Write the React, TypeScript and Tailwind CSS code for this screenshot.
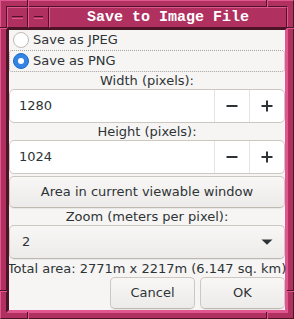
import React from "react";

function Bevel({ className = "", children }: { className?: string; children?: React.ReactNode }) {
  return (
    <div className={`border border-t-[#e0578f] border-l-[#e0578f] border-b-[#4d1428] border-r-[#4d1428] bg-[#b03060] ${className}`}>
      {children}
    </div>
  );
}

function Radio({ checked, label, focus }: { checked?: boolean; label: string; focus?: boolean }) {
  return (
    <div
      className={`flex items-center gap-[4px] pl-[3px] ${
        focus ? "h-[22px] border border-dotted border-[#a8a4a0] rounded-[3px]" : "h-[20px] border border-transparent"
      }`}
    >
      {checked ? (
        <span className="w-[16px] h-[16px] rounded-full bg-[#3584e4] border border-[#1b6acb] flex items-center justify-center">
          <span className="w-[6px] h-[6px] rounded-full bg-white" />
        </span>
      ) : (
        <span className="w-[16px] h-[16px] rounded-full bg-white border border-[#c0bab4]" />
      )}
      <span>{label}</span>
    </div>
  );
}

function Label({ text, h = "h-[17px]" }: { text: string; h?: string }) {
  return <div className={`${h} flex items-center justify-center leading-none whitespace-nowrap`}>{text}</div>;
}

function Spin({ value }: { value: string }) {
  return (
    <div className="h-[34px] flex bg-white border border-[#cdc7c2] rounded-[5px] overflow-hidden">
      <div className="flex-1 flex items-center pl-[9px]">{value}</div>
      <div className="w-[35px] flex items-center justify-center border-l border-[#e6e3e0]">
        <svg width="12" height="12" viewBox="0 0 12 12">
          <rect x="0.5" y="5" width="11" height="2" fill="#2e3436" />
        </svg>
      </div>
      <div className="w-[35px] flex items-center justify-center border-l border-[#e6e3e0]">
        <svg width="12" height="12" viewBox="0 0 12 12">
          <rect x="0.5" y="5" width="11" height="2" fill="#2e3436" />
          <rect x="5" y="0.5" width="2" height="11" fill="#2e3436" />
        </svg>
      </div>
    </div>
  );
}

const btnBase =
  "flex items-center rounded-[5px] border border-[#cdc7c2] border-b-[#bfb8b1] bg-gradient-to-b from-[#f8f7f6] to-[#edebe9] shadow-[0_1px_0_rgba(0,0,0,0.05)]";
const btn = `${btnBase} justify-center`;

export default function App() {
  return (
    <div
      className="relative w-[294px] h-[319px] bg-[#b03060] border border-t-[#e0578f] border-l-[#e0578f] border-b-[#4d1428] border-r-[#4d1428] p-[5px] text-[13px] text-[#2e3436]"
      style={{ fontFamily: '"DejaVu Sans", sans-serif' }}
    >
      {/* resize handle breaks */}
      <span className="absolute top-[-1px] left-[26px] w-[1px] h-[7px] bg-[#4d1428]" />
      <span className="absolute top-[-1px] left-[27px] w-[1px] h-[7px] bg-[#e0578f]" />
      <span className="absolute top-[-1px] left-[265px] w-[1px] h-[7px] bg-[#4d1428]" />
      <span className="absolute top-[-1px] left-[266px] w-[1px] h-[7px] bg-[#e0578f]" />
      <span className="absolute bottom-[-1px] left-[26px] w-[1px] h-[7px] bg-[#4d1428]" />
      <span className="absolute bottom-[-1px] left-[27px] w-[1px] h-[7px] bg-[#e0578f]" />
      <span className="absolute bottom-[-1px] left-[265px] w-[1px] h-[7px] bg-[#4d1428]" />
      <span className="absolute bottom-[-1px] left-[266px] w-[1px] h-[7px] bg-[#e0578f]" />
      <span className="absolute left-[-1px] top-[26px] h-[1px] w-[7px] bg-[#4d1428]" />
      <span className="absolute left-[-1px] top-[27px] h-[1px] w-[7px] bg-[#e0578f]" />
      <span className="absolute right-[-1px] top-[26px] h-[1px] w-[7px] bg-[#4d1428]" />
      <span className="absolute right-[-1px] top-[27px] h-[1px] w-[7px] bg-[#e0578f]" />
      <span className="absolute left-[-1px] top-[289px] h-[1px] w-[7px] bg-[#4d1428]" />
      <span className="absolute left-[-1px] top-[290px] h-[1px] w-[7px] bg-[#e0578f]" />
      <span className="absolute right-[-1px] top-[289px] h-[1px] w-[7px] bg-[#4d1428]" />
      <span className="absolute right-[-1px] top-[290px] h-[1px] w-[7px] bg-[#e0578f]" />

      <div className="h-full flex flex-col border border-t-[#4d1428] border-l-[#4d1428] border-b-[#e0578f] border-r-[#e0578f]">
        {/* title bar */}
        <div className="h-[21px] flex">
          <Bevel className="w-[21px] flex items-center justify-center">
            <span className="w-[11px] h-[3px] border-t border-b border-t-[#4d1428] border-b-[#e0578f] bg-[#b03060]" />
          </Bevel>
          <Bevel className="w-[21px] flex items-center justify-center">
            <span className="w-[9px] h-[3px] border-t border-b border-t-[#4d1428] border-b-[#e0578f] bg-[#b03060]" />
          </Bevel>
          <Bevel className="flex-1 flex items-center justify-center">
            <span
              className="text-white text-[15px] font-bold leading-none"
              style={{ fontFamily: '"Liberation Mono", monospace' }}
            >
              Save to Image File
            </span>
          </Bevel>
        </div>

        {/* content */}
        <div className="flex-1 flex flex-col bg-[#f6f5f4] border-2 border-t-[#4d1428] border-l-[#4d1428] border-b-[#e0578f] border-r-[#e0578f]">
          <Radio label="Save as JPEG" />
          <Radio label="Save as PNG" checked focus />
          <Label text="Width (pixels):" />
          <Spin value="1280" />
          <Label text="Height (pixels):" />
          <Spin value="1024" />
          <div className={`${btn} h-[32px] mt-[2px]`}>Area in current viewable window</div>
          <Label text="Zoom (meters per pixel):" />
          <div className={`${btnBase} h-[34px] justify-between pl-[12px] pr-[11px]`}>
            <span>2</span>
            <svg width="12" height="6" viewBox="0 0 12 6">
              <path d="M0.5 0.5 L11.5 0.5 L6 5.8 Z" fill="#2e3436" />
            </svg>
          </div>
          <Label text="Total area: 2771m x 2217m (6.147 sq. km)" h="h-[18px]" />
          <div className="h-[32px] flex justify-end gap-[5px]">
            <div className={`${btn} w-[85px]`}>Cancel</div>
            <div className={`${btn} w-[85px]`}>OK</div>
          </div>
        </div>
      </div>
    </div>
  );
}
